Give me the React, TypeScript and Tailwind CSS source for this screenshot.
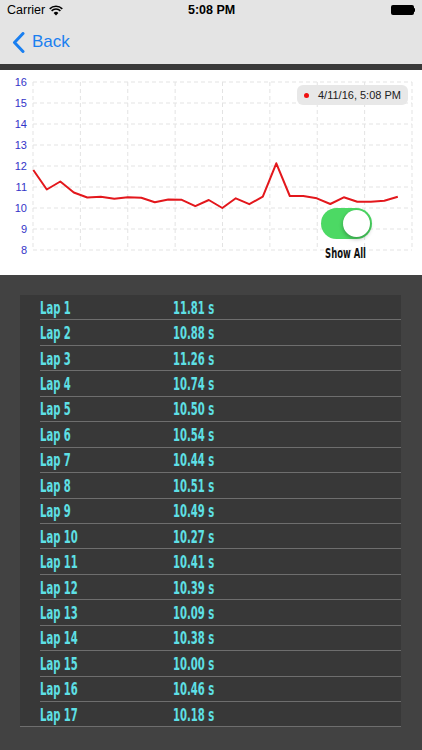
import React from "react";

// lap times shown in the table (first 17) and the chart (all of them)
const laps = [
  11.81, 10.88, 11.26, 10.74, 10.5, 10.54, 10.44, 10.51, 10.49, 10.27, 10.41,
  10.39, 10.09, 10.38, 10.0, 10.46, 10.18, 10.54, 12.13, 10.57, 10.57, 10.46,
  10.19, 10.51, 10.3, 10.3, 10.35, 10.54,
];

const GRID_LEFT = 33;
const GRID_RIGHT = 412;
const GRID_TOP = 12;
const STEP_Y = 21;

function yFor(v: number) {
  return GRID_TOP + (16 - v) * STEP_Y;
}

function StatusBar() {
  return (
    <div className="h-[20px] flex items-center justify-between px-[7px] text-[12.5px] text-black relative">
      <div className="flex items-center gap-[4px]">
        <span>Carrier</span>
        <svg width="14" height="11" viewBox="0 0 14 11">
          <path d="M7 10.5 L4.6 7.9 A3.4 3.4 0 0 1 9.4 7.9 Z" fill="#000" />
          <path d="M2.6 5.9 A6.2 6.2 0 0 1 11.4 5.9" stroke="#000" strokeWidth="1.5" fill="none" />
          <path d="M0.7 3.9 A9 9 0 0 1 13.3 3.9" stroke="#000" strokeWidth="1.5" fill="none" />
        </svg>
      </div>
      <span className="absolute left-[188px] font-bold text-[12.5px]">5:08 PM</span>
      <div className="flex items-center">
        <div className="w-[23px] h-[10px] bg-black rounded-[2px]" />
        <div className="w-[1.5px] h-[4px] bg-black rounded-r-[1px]" />
      </div>
    </div>
  );
}

function NavBar() {
  return (
    <div className="h-[44px] flex items-center pl-[12px] text-[#1a7ff0]">
      <svg width="13" height="21" viewBox="0 0 13 21" className="mr-[7px]">
        <path d="M11 1.5 L2.5 10.5 L11 19.5" stroke="#1a7ff0" strokeWidth="3" fill="none" strokeLinecap="round" strokeLinejoin="round" />
      </svg>
      <span className="text-[17px]">Back</span>
    </div>
  );
}

function Chart() {
  const points = laps
    .map((v, i) => `${(33.3 + i * 13.5).toFixed(1)},${yFor(v).toFixed(1)}`)
    .join(" ");
  const cols = Array.from({ length: 9 }, (_, i) => GRID_LEFT + (i * (GRID_RIGHT - GRID_LEFT)) / 8);
  const rows = Array.from({ length: 9 }, (_, i) => GRID_TOP + i * STEP_Y);

  return (
    <div className="relative h-[205px] bg-white">
      <svg width="422" height="205" className="absolute left-0 top-0">
        {cols.map((x) => (
          <line key={"c" + x} x1={x} x2={x} y1={GRID_TOP} y2={GRID_TOP + 8 * STEP_Y} stroke="#e3e3e3" strokeDasharray="4 3" />
        ))}
        {rows.map((y) => (
          <line key={"r" + y} x1={GRID_LEFT} x2={GRID_RIGHT} y1={y} y2={y} stroke="#e3e3e3" strokeDasharray="4 3" />
        ))}
        {rows.map((y, i) => (
          <text key={"t" + y} x="27" y={y} textAnchor="end" dominantBaseline="central" fontSize="11" fill="#3434c8" fontFamily="Liberation Sans, sans-serif">
            {16 - i}
          </text>
        ))}
        <polyline points={points} fill="none" stroke="#e3171c" strokeWidth="2" strokeLinejoin="round" />
      </svg>

      {/* legend badge */}
      <div className="absolute left-[297px] top-[15px] w-[111px] h-[20px] rounded-[6px] bg-[#e8e8e8] flex items-center pl-[7px] gap-[9px]">
        <div className="w-[5px] h-[5px] rounded-full bg-[#f01010]" />
        <span className="text-[11px] text-[#222]">4/11/16, 5:08 PM</span>
      </div>

      {/* show all switch */}
      <div className="absolute left-[321px] top-[138px] w-[51px] h-[31px] rounded-full bg-[#4cd964]">
        <div className="absolute right-[2px] top-[2px] w-[27px] h-[27px] rounded-full bg-white shadow-[0_2px_4px_rgba(0,0,0,0.3)]" />
      </div>
      <div className="absolute left-[310px] top-[171px] w-[71px] text-center">
        <span className="inline-block font-['Liberation_Sans_Narrow','DejaVu_Sans_Condensed','Liberation_Sans',sans-serif] font-bold text-[14px] text-[#111] scale-x-[0.67]">
          Show All
        </span>
      </div>
    </div>
  );
}

export default function App() {
  const rows = laps.slice(0, 17);
  return (
    <div className="w-[422px] h-[750px] overflow-hidden bg-[#424242] font-['Liberation_Sans',sans-serif]">
      <div className="bg-[#e4e4e4]">
        <StatusBar />
        <NavBar />
      </div>
      <div className="h-[6px] bg-[#3a3a3a]" />
      <Chart />
      <div className="pt-[20px] pl-[20px] pr-[21px]">
        {rows.map((t, i) => {
          const last = i === rows.length - 1;
          return (
            <div key={i} className={"h-[25.44px] bg-[#383838] pl-[20px] " + (last ? "border-b border-[#6e6e6e]" : "")}>
              <div className={"h-full flex items-center text-[#5ee0e6] font-['Liberation_Sans_Narrow','DejaVu_Sans_Condensed','Liberation_Sans',sans-serif] font-bold text-[18px] " + (last ? "" : "border-b border-[#6e6e6e]")}>
                <span className="w-[133px] inline-block origin-left scale-x-[0.62]">Lap {i + 1}</span>
                <span className="inline-block origin-left scale-x-[0.62]">{t.toFixed(2)} s</span>
              </div>
            </div>
          );
        })}
      </div>
    </div>
  );
}
